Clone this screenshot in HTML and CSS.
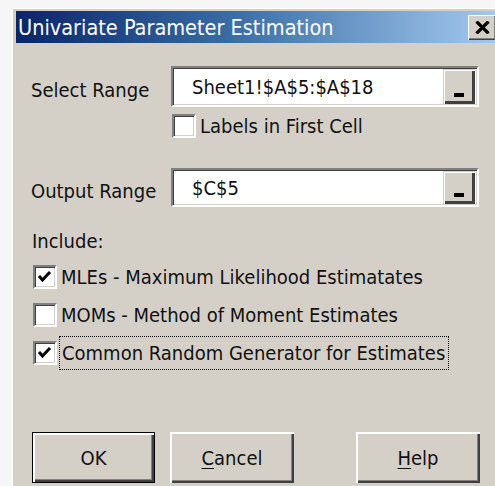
FILE: index.html
```html
<!DOCTYPE html>
<html>
<head>
<meta charset="utf-8">
<title>Univariate Parameter Estimation</title>
<link rel="stylesheet" href="styles.css">
</head>
<body>
<div class="window">
  <div class="titlebar">
    <span class="title">Univariate Parameter Estimation</span>
    <button class="close" type="button" aria-label="Close">
      <svg width="15" height="13" viewBox="0 0 15 13"><path d="M1.5 0.5 L13.5 12.5 M13.5 0.5 L1.5 12.5" stroke="#000" stroke-width="3.2"/></svg>
    </button>
  </div>
  <div class="content">
    <div class="range-row first">
      <span class="range-label">Select Range</span>
      <div class="field">
        <span class="field-text">Sheet1!$A$5:$A$18</span>
        <button class="collapse" type="button"><span class="dash"></span></button>
      </div>
    </div>
    <label class="check labels-check">
      <span class="box"></span>
      <span class="check-text">Labels in First Cell</span>
    </label>
    <div class="range-row second">
      <span class="range-label">Output Range</span>
      <div class="field">
        <span class="field-text">$C$5</span>
        <button class="collapse" type="button"><span class="dash"></span></button>
      </div>
    </div>
    <div class="include">Include:</div>
    <div class="options">
      <label class="check">
        <span class="box"><svg width="20" height="20" viewBox="0 0 20 20"><polyline points="4,9 7.5,13 15,5" fill="none" stroke="#000" stroke-width="3"/></svg></span>
        <span class="check-text">MLEs - Maximum Likelihood Estimatates</span>
      </label>
      <label class="check">
        <span class="box"></span>
        <span class="check-text">MOMs - Method of Moment Estimates</span>
      </label>
      <label class="check">
        <span class="box"><svg width="20" height="20" viewBox="0 0 20 20"><polyline points="4,9 7.5,13 15,5" fill="none" stroke="#000" stroke-width="3"/></svg></span>
        <span class="check-text focused">Common Random Generator for Estimates</span>
      </label>
    </div>
    <div class="buttons">
      <button class="btn default" type="button">OK</button>
      <button class="btn" type="button"><u>C</u>ancel</button>
      <button class="btn help" type="button"><u>H</u>elp</button>
    </div>
  </div>
</div>
</body>
</html>
```
FILE: styles.css
```css
html, body {
  margin: 0;
  padding: 0;
}
body {
  background: #f6f6f6;
  width: 495px;
  height: 486px;
  overflow: hidden;
  font-family: "DejaVu Sans Condensed", "DejaVu Sans", sans-serif;
  font-stretch: condensed;
  font-size: 20px;
  color: #111;
}
button {
  font: inherit;
  color: inherit;
  padding: 0;
  margin: 0;
}

/* window frame */
.window {
  box-sizing: border-box;
  margin: 8px 0 0 12px;
  width: 492px;
  height: 490px;
  background: #d4d0c8;
  border-top: 1px solid #ffffff;
  border-left: 1px solid #ffffff;
  padding: 2px 3px 0 3px;
}

.titlebar {
  height: 32px;
  display: flex;
  align-items: center;
  background: linear-gradient(to right, #0a246a 0%, #3a6ea5 45%, #a6caf0 100%);
}
.title {
  flex: 1;
  color: #ffffff;
  font-size: 21.5px;
  padding-left: 2px;
  white-space: nowrap;
}
.close {
  width: 28px;
  height: 25px;
  margin-right: 5px;
  background: #d4d0c8;
  border: none;
  box-shadow: inset 1px 1px #ffffff, inset -1px -1px #404040, inset -2px -2px #808080;
  display: flex;
  align-items: center;
  justify-content: center;
}
.close svg { display: block; margin-top: 1px; }

/* dialog body */
.content {
  padding-left: 15px;
}

.range-row {
  display: grid;
  grid-template-columns: 140px 308px;
  align-items: center;
}
.range-row.first { margin-top: 23px; height: 41px; }
.range-row.second { margin-top: 30px; height: 39px; }
.range-label {
  padding-top: 6px;
  white-space: nowrap;
}

.field {
  box-sizing: border-box;
  height: 100%;
  display: flex;
  align-items: center;
  background: #ffffff;
  border: 2px solid;
  border-color: #808080 #ffffff #ffffff #808080;
  box-shadow: inset 1px 1px #404040, inset -1px -1px #d4d0c8;
}
.field-text {
  flex: 1;
  padding-left: 19px;
  white-space: nowrap;
}
.collapse {
  align-self: stretch;
  width: 32px;
  margin: 1px 2px 1px 0;
  background: #d4d0c8;
  border: none;
  box-shadow: inset 1px 1px #d4d0c8, inset 2px 2px #ffffff, inset -1px -1px #404040, inset -3px -3px #404040;
  display: flex;
  align-items: flex-end;
  justify-content: center;
  padding-bottom: 7px;
  box-sizing: border-box;
}
.dash {
  width: 10px;
  height: 4px;
  background: #000;
}

/* checkboxes */
.check {
  display: flex;
  align-items: center;
  height: 24px;
}
.box {
  box-sizing: border-box;
  width: 24px;
  height: 24px;
  flex: none;
  background: #ffffff;
  border: 2px solid;
  border-color: #808080 #ffffff #ffffff #808080;
  box-shadow: inset 1px 1px #404040, inset -1px -1px #d4d0c8;
  display: flex;
  align-items: center;
  justify-content: center;
}
.box svg { display: block; }
.check-text {
  margin-left: 4px;
  white-space: nowrap;
}
.labels-check {
  margin: 7px 0 0 141px;
}

.include {
  margin-top: 22px;
  margin-left: 1px;
  line-height: 24px;
}
.options {
  margin-top: 12px;
  margin-left: 2px;
  display: flex;
  flex-direction: column;
  gap: 14px;
}
.focused {
  margin-left: 3px;
  padding: 4px 3px 4px 2px;
  outline: 1px dotted #000;
}

/* push buttons */
.buttons {
  margin-top: 67px;
  margin-left: 1px;
  display: flex;
}
.btn {
  box-sizing: border-box;
  width: 124px;
  height: 51px;
  background: #d4d0c8;
  border: none;
  box-shadow: inset 2px 2px #ffffff, inset -2px -2px #404040, inset -3px -3px #808080;
  margin-right: 15px;
}
.btn.default {
  width: 123px;
  box-shadow: inset 0 0 0 1px #000, inset 3px 3px #ffffff, inset -3px -3px #404040, inset -4px -4px #808080;
}
.btn.help {
  margin-left: 47px;
}
.btn u {
  text-decoration-thickness: 1px;
  text-underline-offset: 3px;
}
```
